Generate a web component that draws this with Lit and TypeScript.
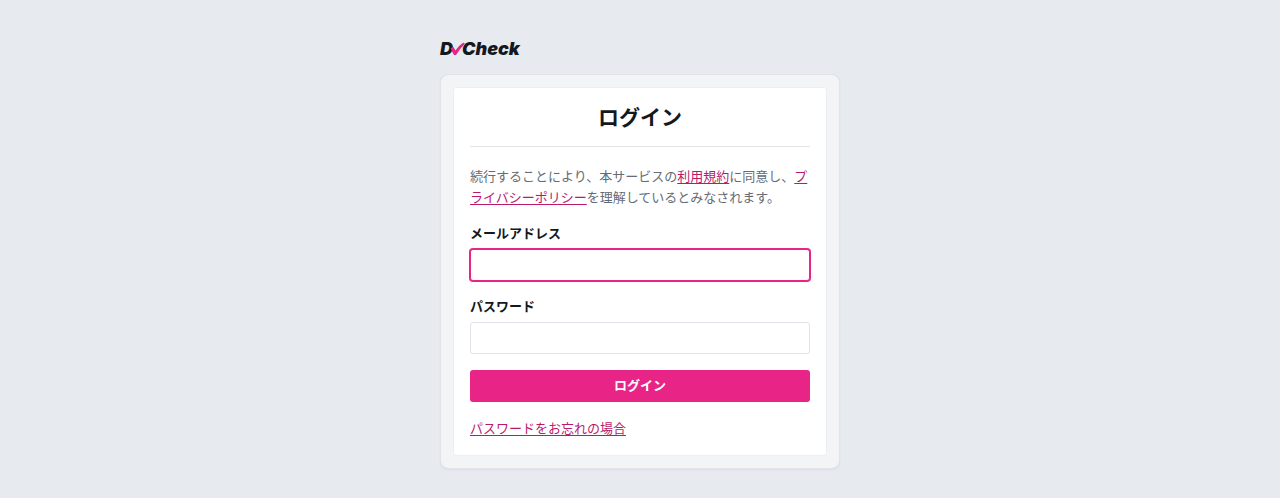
import { LitElement, html, css } from "lit";
import { customElement } from "lit/decorators.js";

@customElement("brand-logo")
class BrandLogo extends LitElement {
  static styles = css`
    :host {
      display: block;
    }
    .logo {
      display: flex;
      align-items: center;
      height: 20px;
      font: italic 900 18px/20px Inter, "Liberation Sans", sans-serif;
      color: #15181c;
      text-decoration: none;
    }
    .check {
      display: block;
      width: 15px;
      height: 14px;
      margin: 0 -3px 0 -3px;
      z-index: 1;
    }
  `;

  render() {
    return html`
      <a class="logo" href="#" aria-label="DvCheck">
        <span>D</span>
        <svg class="check" viewBox="0 0 15 14" aria-hidden="true">
          <path d="M0.6 6.6Q2 4.8 3.6 5.2L5.4 8.4Q8.8 3.6 13 0.8Q14.6 0.6 14.7 2Q9.8 6.8 6.6 12.2Q5.2 14 3.8 12.8Z" fill="#e82486" />
        </svg>
        <span>Check</span>
      </a>
    `;
  }
}

@customElement("app-root")
class AppRoot extends LitElement {
  static styles = css`
    :host {
      display: block;
      box-sizing: border-box;
      min-height: 100vh;
      padding: 39px 16px 28px;
      background: #e7ebf0;
      color: #15181c;
      font: 13px/20px "Noto Sans CJK JP", sans-serif;
    }
    * {
      box-sizing: border-box;
    }
    .page {
      max-width: 400px;
      margin: 0 auto;
    }
    .frame {
      margin-top: 15px;
      padding: 12px;
      border: 1px solid #e0e4ea;
      border-radius: 8px;
      background: #f3f4f6;
      background-clip: padding-box;
      box-shadow: 0 1px 2px rgba(30, 40, 90, 0.06);
    }
    .card {
      padding: 0 16px 17px;
      border: 1px solid #eceef1;
      border-radius: 3px;
      background: #fff;
    }
    .title {
      margin: 0 0 18px;
      padding: 13px 0 15px;
      border-bottom: 1px solid #e2e4e8;
      font-size: 21px;
      line-height: 30px;
      font-weight: 700;
      text-align: center;
    }
    .terms {
      margin: 0 0 16px;
      line-height: 21px;
      color: #656b76;
    }
    a {
      color: #b91a6b;
      text-decoration: underline;
      text-underline-offset: 2px;
    }
    .field {
      margin-bottom: 15px;
    }
    .label {
      display: block;
      margin-bottom: 6px;
      font-weight: 700;
    }
    .input {
      display: block;
      width: 100%;
      height: 32px;
      padding: 0 8px;
      border: 1px solid #e0e2e7;
      border-radius: 3px;
      background: #fff;
      font: inherit;
      color: inherit;
      outline: none;
    }
    .active,
    .input:focus {
      border-color: #e82486;
      box-shadow: 0 0 0 1px #e82486;
    }
    .submit {
      display: block;
      width: 100%;
      height: 32px;
      margin: 16px 0;
      padding: 0 0 2px;
      border: 0;
      border-radius: 3px;
      background: #e82486;
      color: #fff;
      font: inherit;
      font-weight: 700;
      cursor: pointer;
    }
    .forgot {
      margin: 0;
    }
  `;

  render() {
    return html`
      <main class="page">
        <brand-logo></brand-logo>
        <section class="frame">
          <form class="card">
            <h1 class="title">ログイン</h1>
            <p class="terms">続行することにより、本サービスの<a href="#terms">利用規約</a>に同意し、<a href="#privacy">プライバシーポリシー</a>を理解しているとみなされます。</p>
            <div class="field">
              <label class="label" for="email">メールアドレス</label>
              <input class="input active" id="email" type="email" autocomplete="username" />
            </div>
            <div class="field">
              <label class="label" for="password">パスワード</label>
              <input class="input" id="password" type="password" autocomplete="current-password" />
            </div>
            <button class="submit" type="button">ログイン</button>
            <p class="forgot"><a href="#reset">パスワードをお忘れの場合</a></p>
          </form>
        </section>
      </main>
    `;
  }
}
